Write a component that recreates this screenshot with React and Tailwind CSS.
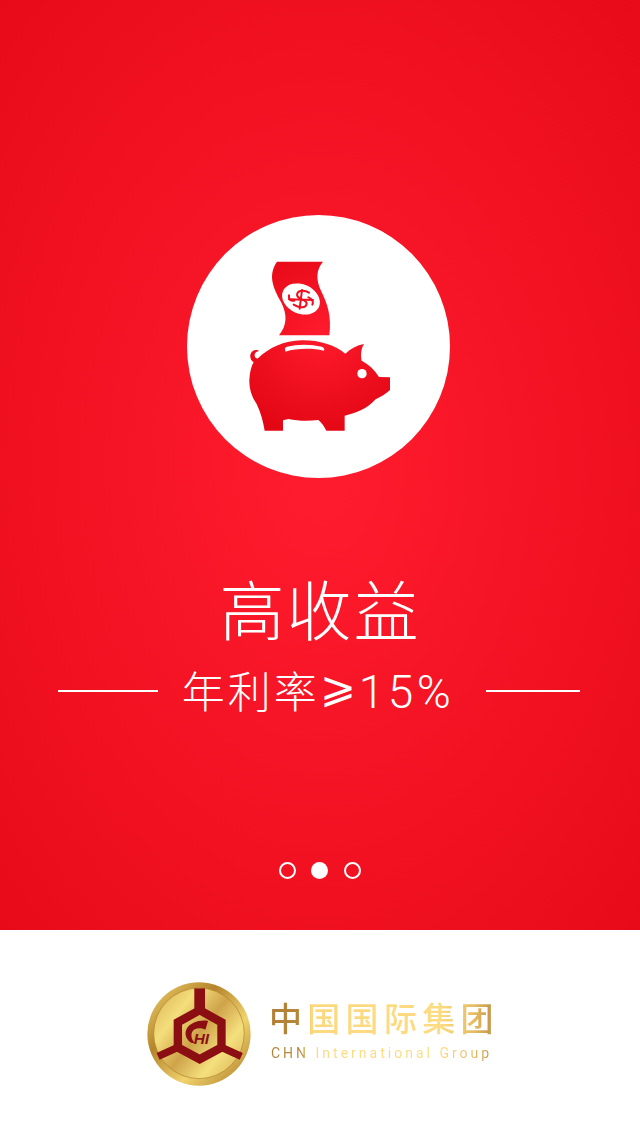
import React from 'react'

function PigIcon() {
    return (
        <svg viewBox="0 0 510 570" className="w-[170px] h-[190px]">
            <defs>
                <radialGradient id="pigRed" gradientUnits="userSpaceOnUse" cx="270" cy="250" r="320">
                    <stop offset="0" stopColor="#ff1b2d" />
                    <stop offset="1" stopColor="#e20613" />
                </radialGradient>
            </defs>
            <path fill="url(#pigRed)" d="M138 35 L276 35 C256 58 254 88 270 122 C290 162 302 200 295 256 L144 256 C168 226 170 194 150 156 C126 112 110 76 138 35Z" />
            <ellipse cx="210" cy="147" rx="59" ry="44" transform="rotate(24 210 147)" fill="#fff" />
            <g fill="none" stroke="#ee1020" strokeWidth="6" strokeLinecap="round">
                <path d="M234 128 C222 120 204 120 199 130 C194 141 208 146 214 149 C222 152 232 158 224 168 C217 175 200 172 188 164" />
                <path d="M174 136 C172 146 178 154 190 152 M232 142 C244 146 248 156 244 164" />
                <path d="M174 148 L246 150" />
                <path d="M213 120 L206 176" />
            </g>
            <path fill="url(#pigRed)" fillRule="evenodd" d="M68 336 C58 332 54 316 62 306 C68 299 80 298 84 303 C78 304 70 308 71 317 C72 323 76 326 81 325 C112 294 160 272 212 271 C262 270 310 284 343 311 C358 296 378 286 399 282 C390 296 388 316 392 332 C414 344 432 360 444 381 L477 382 L477 420 C464 432 450 440 434 448 C408 476 376 490 341 497 L341 542 L286 542 C280 530 272 518 262 510 C232 514 200 513 172 507 L156 511 L156 542 L101 542 C96 514 90 490 77 462 C62 440 54 416 55 390 C56 370 60 350 68 336Z M163 300 C160 296 162 292 168 290 C198 282 240 282 272 290 C280 293 282 298 278 302 C246 294 198 294 163 305Z" />
            <circle cx="393" cy="371" r="14" fill="#fff" />
        </svg>
    )
}

function CoinLogo() {
    return (
        <svg viewBox="0 0 310 310" className="w-[104px] h-[104px]">
            <defs>
                <linearGradient id="rimGold" x1="0" y1="0" x2="1" y2="1">
                    <stop offset="0" stopColor="#f3d76f" />
                    <stop offset="0.35" stopColor="#b5842c" />
                    <stop offset="0.65" stopColor="#f0d36c" />
                    <stop offset="1" stopColor="#a87522" />
                </linearGradient>
                <linearGradient id="faceGold" x1="0" y1="0" x2="1" y2="0.8">
                    <stop offset="0" stopColor="#d9ae50" />
                    <stop offset="0.3" stopColor="#f4de7c" />
                    <stop offset="0.55" stopColor="#cfa349" />
                    <stop offset="0.8" stopColor="#f5e07e" />
                    <stop offset="1" stopColor="#e0bb5c" />
                </linearGradient>
            </defs>
            <circle cx="155" cy="155" r="154" fill="url(#rimGold)" />
            <circle cx="155" cy="153" r="135" fill="url(#faceGold)" stroke="#b0812c" strokeWidth="2" />
            <path fill="none" stroke="#8b0e12" strokeWidth="25" strokeLinejoin="miter" d="M157 84 L222 120 L222 195 L157 230 L92 195 L92 120 Z" />
            <path fill="none" stroke="#8b0e12" strokeWidth="32" d="M157 19 L157 90" />
            <path fill="none" stroke="#8b0e12" strokeWidth="22" d="M92 195 L33 222 M222 195 L281 222" />
            <path fill="#8b0e12" d="M182 116 L174 142 C156 134 140 138 134 150 C130 162 134 172 142 182 L134 182 C118 174 110 156 118 140 C128 122 156 112 182 116Z" />
            <text x="162" y="184" textAnchor="middle" fontSize="46" fontWeight="700" fontStyle="italic" fill="#8b0e12" fontFamily="Liberation Sans, sans-serif">HI</text>
        </svg>
    )
}

function App() {
    return (
        <div className="w-[640px] h-[1136px] flex flex-col bg-white overflow-hidden font-[Roboto,'Noto_Sans_CJK_SC',sans-serif]">
            <div className="h-[930px] flex flex-col items-center pt-[215px] bg-[radial-gradient(ellipse_at_center,#ff1c2e_0%,#e80a19_100%)]">
                <div className="w-[263px] h-[263px] mr-[3px] rounded-full bg-white flex items-center justify-center">
                    <div className="mt-[-3px] mr-[6px]">
                        <PigIcon />
                    </div>
                </div>

                <div className="mt-[97px] text-[65px] leading-[76px] tracking-[2px] font-light text-white">高收益</div>

                <div className="mt-[10px] w-full flex items-center pl-[58px]">
                    <div className="w-[100px] h-[2px] bg-white" />
                    <div className="w-[328px] h-[60px] pr-[8px] text-center text-[43px] leading-[52px] tracking-[3px] font-light text-white whitespace-nowrap">
                        年利率<span className="align-[6px]">⩾</span><span className="text-[46px] tracking-[3.5px]">15%</span>
                    </div>
                    <div className="w-[94px] h-[2px] bg-white" />
                </div>

                <div className="mt-[141px] mr-[1px] flex items-center gap-[15.5px]">
                    <div className="w-[17px] h-[17px] rounded-full border-2 border-white" />
                    <div className="w-[17px] h-[17px] rounded-full bg-white" />
                    <div className="w-[17px] h-[17px] rounded-full border-2 border-white" />
                </div>
            </div>

            <div className="flex-1 flex items-center pl-[147px] gap-[20px]">
                <div className="mt-[2px]">
                    <CoinLogo />
                </div>
                <div className="flex flex-col w-[226px] mb-[4px] text-transparent bg-clip-text bg-[linear-gradient(90deg,#b27f36_0%,#b8873a_13%,#fdd97e_18%,#fddb80_75%,#e6bb62_90%,#b98c42_100%)]">
                    <div className="-ml-[2px] text-[33px] leading-[40px] tracking-[5.3px] font-medium whitespace-nowrap">中国国际集团</div>
                    <div className="mt-[4px] text-[14px] leading-[18px] tracking-[3px] whitespace-nowrap">CHN International Group</div>
                </div>
            </div>
        </div>
    )
}

export default App
